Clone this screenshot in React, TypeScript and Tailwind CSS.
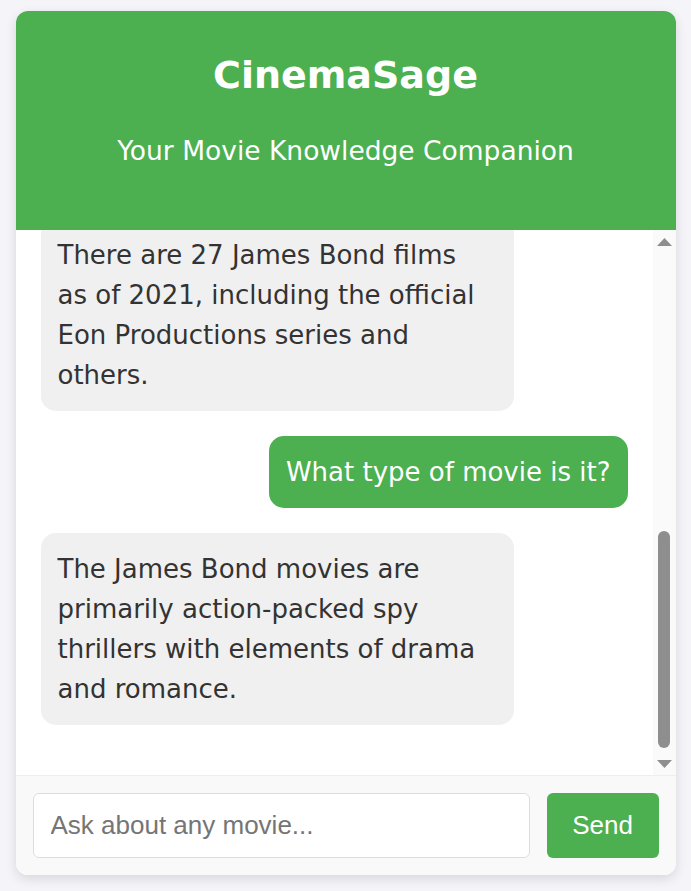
import { useLayoutEffect, useRef } from "react";

type Msg = { from: "bot" | "user"; lines: string[] };

const messages: Msg[] = [
  {
    from: "bot",
    lines: [
      "Hello! I'm CinemaSage, your",
      "movie knowledge companion.",
      "Ask me anything about films,",
      "actors, directors or trivia.",
    ],
  },
  { from: "user", lines: ["Who was the first Bond?"] },
  {
    from: "bot",
    lines: [
      "Sean Connery was the first actor",
      "to play James Bond in the official",
      "film series, starting with Dr. No",
      "in 1962.",
    ],
  },
  { from: "user", lines: ["How many James Bond", "movies are there?"] },
  {
    from: "bot",
    lines: [
      "There are 27 James Bond films",
      "as of 2021, including the official",
      "Eon Productions series and",
      "others.",
    ],
  },
  { from: "user", lines: ["What type of movie is it?"] },
  {
    from: "bot",
    lines: [
      "The James Bond movies are",
      "primarily action-packed spy",
      "thrillers with elements of drama",
      "and romance.",
    ],
  },
];

function Bubble({ m }: { m: Msg }) {
  const content = m.lines.map((l, i) => (
    <span key={i} className="whitespace-nowrap">
      {l}
      {i < m.lines.length - 1 && <br />}
    </span>
  ));
  if (m.from === "user") {
    return (
      <div className="flex justify-end">
        <div className="rounded-[15px] bg-[#4caf50] px-[17px] py-4 text-[26px] leading-[40px] text-white">
          {content}
        </div>
      </div>
    );
  }
  return (
    <div className="flex justify-start">
      <div className="w-[473px] rounded-[15px] bg-[#f0f0f0] px-[17px] py-4 text-[26px] leading-[40px] text-[#333]">
        {content}
      </div>
    </div>
  );
}

function ScrollBar() {
  return (
    <div className="flex w-[23px] shrink-0 flex-col bg-[#fafafa]">
      <div className="flex h-[23px] items-center justify-center">
        <svg width="15" height="8" viewBox="0 0 15 8">
          <polygon points="7.5,0 15,8 0,8" fill="#8e8e8e" />
        </svg>
      </div>
      <div className="flex flex-1 flex-col items-center pt-[278px]">
        <div className="h-[217px] w-[12px] rounded-full bg-[#8e8e8e]" />
      </div>
      <div className="flex h-[23px] items-center justify-center">
        <svg width="15" height="8" viewBox="0 0 15 8">
          <polygon points="0,0 15,0 7.5,8" fill="#8e8e8e" />
        </svg>
      </div>
    </div>
  );
}

export default function App() {
  const ref = useRef<HTMLDivElement>(null);
  useLayoutEffect(() => {
    if (ref.current) ref.current.scrollTop = ref.current.scrollHeight;
  }, []);

  return (
    <div className="min-h-[891px] w-full bg-[#f4f4f9] pt-[11px] font-['DejaVu_Sans',sans-serif]">
      <div className="mx-auto flex h-[864px] w-[660px] flex-col overflow-hidden rounded-xl bg-white shadow-[0_4px_12px_rgba(0,0,0,0.12)]">
        <header className="flex h-[219px] shrink-0 flex-col items-center bg-[#4caf50] pt-[40px] text-white">
          <h1 className="text-[38px] font-bold leading-[48px]">CinemaSage</h1>
          <p className="mt-[34px] text-[26.5px] leading-[36px]">Your Movie Knowledge Companion</p>
        </header>
        <div className="flex min-h-0 flex-1">
          <div
            ref={ref}
            className="min-h-0 flex-1 overflow-y-auto px-[25px] pt-[25px] [scrollbar-width:none]"
          >
            <div className="flex flex-col gap-[25px] pb-[50px]">
              {messages.map((m, i) => (
                <Bubble key={i} m={m} />
              ))}
            </div>
          </div>
          <ScrollBar />
        </div>
        <div className="flex h-[100px] shrink-0 items-center gap-[17px] border-t border-[#eee] bg-[#f9f9f9] px-[17px]">
          <input
            type="text"
            placeholder="Ask about any movie..."
            className="h-[65px] min-w-0 flex-1 rounded-md border border-[#ddd] bg-white px-[17px] font-['Liberation_Sans',Arial,sans-serif] text-[26px] text-[#333] outline-none placeholder:text-[#757575]"
          />
          <button className="h-[65px] w-[112px] rounded-md bg-[#4caf50] font-['Liberation_Sans',Arial,sans-serif] text-[26px] text-white">
            Send
          </button>
        </div>
      </div>
    </div>
  );
}
